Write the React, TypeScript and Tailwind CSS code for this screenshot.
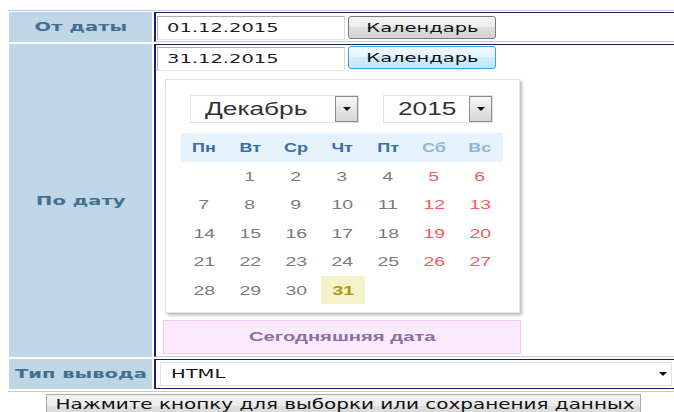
import React from "react";

const NAVY = "border-[#1e1e5c]";

type Cell = { d: number | null; weekend: boolean };

const weekdays = ["Пн", "Вт", "Ср", "Чт", "Пт", "Сб", "Вс"];

// December 2015 starts on a Tuesday
function buildDays(): Cell[] {
  const cells: Cell[] = [];
  const offset = 1;
  for (let i = 0; i < 35; i++) {
    const n = i - offset + 1;
    cells.push({ d: n >= 1 && n <= 31 ? n : null, weekend: i % 7 >= 5 });
  }
  return cells;
}

// Horizontally widened text, anchored at its centre or its left edge
function Wide({ children, left }: { children: React.ReactNode; left?: boolean }) {
  return (
    <span className={left ? "inline-block whitespace-nowrap scale-x-150 origin-left" : "inline-block whitespace-nowrap scale-x-150"}>
      {children}
    </span>
  );
}

function Label({ text }: { text: string }) {
  return (
    <div className="w-[143px] shrink-0 bg-[#bfd6e6] flex items-center justify-center">
      <span className="font-bold text-[13px] text-[#43708f] pl-[1px]">
        <Wide>{text}</Wide>
      </span>
    </div>
  );
}

function DateField({ value }: { value: string }) {
  return (
    <div className="w-[188px] h-[24px] border border-[#abadb3] border-r-[#d5d9e0] border-b-[#dfe3ea] pl-[9px] text-[13px] text-[#1c1c2c] bg-white flex items-center">
      <Wide left>{value}</Wide>
    </div>
  );
}

function CalButton({ focused }: { focused?: boolean }) {
  return (
    <button
      className={
        focused
          ? "w-[148px] h-[23px] ml-[3px] rounded-[3px] border border-[#3c9fd8] bg-[linear-gradient(#f1f9fe,#e3f3fd_50%,#d2ecfc_50%,#c4e5fa)] text-[13px] text-[#111] flex items-center justify-center"
          : "w-[148px] h-[23px] ml-[3px] rounded-[3px] border border-[#7a7a7a] bg-[linear-gradient(#f4f4f4,#ececec_50%,#dedede_50%,#d2d2d2)] text-[13px] text-[#111] flex items-center justify-center"
      }
    >
      <Wide>Календарь</Wide>
    </button>
  );
}

function Caret() {
  return (
    <svg width="8" height="4" viewBox="0 0 8 4">
      <path d="M0 0h8L4 4z" fill="#111" />
    </svg>
  );
}

function DropSelect({ text, wide }: { text: string; wide?: boolean }) {
  return (
    <div
      className={
        wide
          ? "w-[169px] h-[28px] border border-[#e2e2e2] flex items-center justify-between bg-white"
          : "w-[110px] h-[28px] ml-[24px] border border-[#e2e2e2] flex items-center justify-between bg-white"
      }
    >
      <span className="pl-[14px] text-[17.5px] text-[#333]">
        <Wide left>{text}</Wide>
      </span>
      <div className="w-[23px] h-full border border-[#8c8c8c] bg-[linear-gradient(#f6f6f6,#e6e6e6_50%,#d6d6d6)] flex items-center justify-center">
        <Caret />
      </div>
    </div>
  );
}

function CalendarPopup() {
  const cells = buildDays();
  return (
    <div className="ml-[8px] mt-[8px] w-[355px] h-[234px] bg-white border border-[#e6e6e6] shadow-[2px_2px_3px_rgba(0,0,0,0.28)] font-['Liberation_Sans',Arial,sans-serif]">
      <div className="flex pt-[15px] pl-[24px]">
        <DropSelect text="Декабрь" wide />
        <DropSelect text="2015" />
      </div>
      <div className="ml-[15px] mt-[10px] w-[322px]">
        <div className="grid grid-cols-7 h-[29px] bg-[#e6f3fd] items-center">
          {weekdays.map((w, i) => (
            <span
              key={w}
              className={
                i >= 5
                  ? "text-center font-bold text-[12px] text-[#93b5d5]"
                  : "text-center font-bold text-[12px] text-[#3a6ea3]"
              }
            >
              <Wide>{w}</Wide>
            </span>
          ))}
        </div>
        <div className="grid grid-cols-7 auto-rows-[28.5px]">
          {cells.map((c, i) =>
            c.d === 31 ? (
              <div key={i} className="flex items-center justify-center">
                <span className="w-[44px] h-[28px] ml-[2px] bg-[#f5f2cb] flex items-center justify-center font-bold text-[13px] text-[#a69b1b]">
                  <Wide>31</Wide>
                </span>
              </div>
            ) : (
              <div
                key={i}
                className={
                  c.weekend
                    ? "flex items-center justify-center text-[13px] text-[#f45b5b]"
                    : "flex items-center justify-center text-[13px] text-[#7b7b7b]"
                }
              >
                <Wide>{c.d ?? ""}</Wide>
              </div>
            )
          )}
        </div>
      </div>
    </div>
  );
}

export default function App() {
  return (
    <div className="w-[674px] h-[412px] overflow-hidden bg-white font-['DejaVu_Sans',sans-serif] text-[13px]">
      <div className="pt-[10px] pl-[8px]">
        <div className="border-t border-b border-[#c6c6e6] pt-[1px] pb-[2px] pl-[1px] flex flex-col gap-[2px]">
          {/* From date */}
          <div className="flex h-[30px]">
            <Label text="От даты" />
            <div className={`ml-[2px] flex-1 border-l-2 border-t border-b ${NAVY} border-b-[#c6c6e6] pl-[1px] pt-[2px] flex items-start`}>
              <div className="mt-[1px]">
                <DateField value="01.12.2015" />
              </div>
              <div className="mt-[1px]">
                <CalButton />
              </div>
            </div>
          </div>

          {/* To date with open calendar */}
          <div className="flex h-[313px]">
            <Label text="По дату" />
            <div className={`ml-[2px] flex-1 border-l-2 border-t border-b ${NAVY} border-b-[#c6c6e6] pl-[1px]`}>
              <div className="flex items-start">
                <div className="mt-[2px]">
                  <DateField value="31.12.2015" />
                </div>
                <div className="mt-[1px]">
                  <CalButton focused />
                </div>
              </div>
              <CalendarPopup />
              <div className="ml-[6px] mt-[7px] w-[358px] h-[34px] bg-[#fbe9fd] border border-[#efc9f3] flex items-center justify-center font-['Liberation_Sans',Arial,sans-serif] font-bold text-[13.5px] text-[#8e6f9d]">
                <Wide>Сегодняшняя дата</Wide>
              </div>
            </div>
          </div>

          {/* Output type */}
          <div className="flex h-[30px]">
            <Label text="Тип вывода" />
            <div className={`ml-[2px] flex-1 border-l-2 border-t border-b ${NAVY} pl-[4px] pt-[2px]`}>
              <div className="w-[512px] h-[24px] border border-[#e3e3e3] bg-white flex items-center justify-between pl-[10px] pr-[4px]">
                <span className="text-[13px] text-[#111]">
                  <Wide left>HTML</Wide>
                </span>
                <Caret />
              </div>
            </div>
          </div>
        </div>
      </div>
      <button className="ml-[46px] mt-[2px] w-[595px] h-[24px] border border-[#acacac] bg-[linear-gradient(#f3f3f3,#ebebeb_50%,#dfdfdf_50%,#d4d4d4)] text-[13.3px] text-[#111] flex items-start justify-center pl-[4px]">
        <Wide>Нажмите кнопку для выборки или сохранения данных</Wide>
      </button>
    </div>
  );
}
